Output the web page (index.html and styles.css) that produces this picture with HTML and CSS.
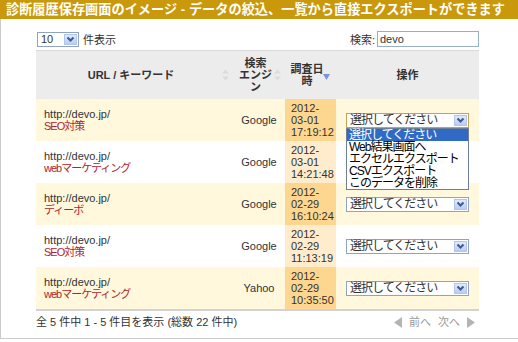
FILE: index.html
```html
<!DOCTYPE html>
<html lang="ja">
<head>
  <meta charset="UTF-8" />
  <title>診断履歴保存画面</title>
  <link rel="stylesheet" href="styles.css">
</head>
<body>

  <h1 class="title">診断履歴保存画面のイメージ - データの絞込、一覧から直接エクスポートができます</h1>

  <div class="content">
    <div class="toolbar">
      <div class="length">
        <span class="select select-small">
          <span>10</span>
          <span class="select-arrow"><svg width="9" height="7" viewBox="0 0 9 7"><polyline points="1.5,1.5 4.5,4.5 7.5,1.5" fill="none" stroke="#3f5a8c" stroke-width="2"/></svg></span>
        </span>
        <span>件表示</span>
      </div>
      <div class="search">
        <span>検索:</span>
        <input class="search-input" type="text" value="devo">
      </div>
    </div>

    <table class="list">
      <colgroup>
        <col class="w-url"><col class="w-engine"><col class="w-date"><col class="w-op">
      </colgroup>
      <thead>
        <tr>
          <th>URL / キーワード<svg class="sort" width="7" height="11" viewBox="0 0 7 11"><polygon points="3.5,0 7,4 0,4" fill="#dcdcdc"/><polygon points="0,7 7,7 3.5,11" fill="#dcdcdc"/></svg></th>
          <th>検索<br>エンジン<svg class="sort" width="7" height="11" viewBox="0 0 7 11"><polygon points="3.5,0 7,4 0,4" fill="#dcdcdc"/><polygon points="0,7 7,7 3.5,11" fill="#dcdcdc"/></svg></th>
          <th>調査日時<svg class="sort sort-on" width="7" height="6" viewBox="0 0 7 6"><polygon points="0,0 7,0 3.5,6" fill="#7b92dc"/></svg></th>
          <th class="th-op">操作</th>
        </tr>
      </thead>
      <tbody>
        <tr class="odd">
          <td class="url">http://devo.jp/<br><span class="keyword">SEO対策</span></td>
          <td class="engine">Google</td>
          <td class="date">2012-<br>03-01<br>17:19:12</td>
          <td class="op">
            <div class="select select-op focus">
              <span>選択してください</span>
              <span class="select-arrow"><svg width="9" height="7" viewBox="0 0 9 7"><polyline points="1.5,1.5 4.5,4.5 7.5,1.5" fill="none" stroke="#3f5a8c" stroke-width="2"/></svg></span>
              <ul class="options">
                <li class="active">選択してください</li>
                <li>Web結果画面へ</li>
                <li>エクセルエクスポート</li>
                <li>CSVエクスポート</li>
                <li>このデータを削除</li>
              </ul>
            </div>
          </td>
        </tr>
        <tr class="even">
          <td class="url">http://devo.jp/<br><span class="keyword">webマーケティング</span></td>
          <td class="engine">Google</td>
          <td class="date">2012-<br>03-01<br>14:21:48</td>
          <td class="op"></td>
        </tr>
        <tr class="odd">
          <td class="url">http://devo.jp/<br><span class="keyword">ディーボ</span></td>
          <td class="engine">Google</td>
          <td class="date">2012-<br>02-29<br>16:10:24</td>
          <td class="op">
            <div class="select select-op">
              <span>選択してください</span>
              <span class="select-arrow"><svg width="9" height="7" viewBox="0 0 9 7"><polyline points="1.5,1.5 4.5,4.5 7.5,1.5" fill="none" stroke="#3f5a8c" stroke-width="2"/></svg></span>
            </div>
          </td>
        </tr>
        <tr class="even">
          <td class="url">http://devo.jp/<br><span class="keyword">SEO対策</span></td>
          <td class="engine">Google</td>
          <td class="date">2012-<br>02-29<br>11:13:19</td>
          <td class="op">
            <div class="select select-op">
              <span>選択してください</span>
              <span class="select-arrow"><svg width="9" height="7" viewBox="0 0 9 7"><polyline points="1.5,1.5 4.5,4.5 7.5,1.5" fill="none" stroke="#3f5a8c" stroke-width="2"/></svg></span>
            </div>
          </td>
        </tr>
        <tr class="odd">
          <td class="url">http://devo.jp/<br><span class="keyword">webマーケティング</span></td>
          <td class="engine">Yahoo</td>
          <td class="date">2012-<br>02-29<br>10:35:50</td>
          <td class="op">
            <div class="select select-op">
              <span>選択してください</span>
              <span class="select-arrow"><svg width="9" height="7" viewBox="0 0 9 7"><polyline points="1.5,1.5 4.5,4.5 7.5,1.5" fill="none" stroke="#3f5a8c" stroke-width="2"/></svg></span>
            </div>
          </td>
        </tr>
      </tbody>
    </table>

    <div class="footer">
      <div class="info">全 5 件中 1 - 5 件目を表示 (総数 22 件中)</div>
      <div class="pager">
        <svg width="8" height="11" viewBox="0 0 8 11"><polygon points="8,0 8,11 0,5.5" fill="#b4b4b4"/></svg>
        <span>前へ</span>
        <span>次へ</span>
        <svg width="8" height="11" viewBox="0 0 8 11"><polygon points="0,0 0,11 8,5.5" fill="#b4b4b4"/></svg>
      </div>
    </div>
  </div>

</body>
</html>
```

FILE: styles.css
```css
body {
  margin: 0;
  font-family: "Liberation Sans", "Noto Sans CJK JP", sans-serif;
  font-size: 11px;
  color: #333;
  background: #fff;
}
.title {
  margin: 0;
  height: 19px;
  line-height: 19px;
  padding-left: 6px;
  background: #c9990b;
  color: #fff;
  font-size: 13.2px;
  font-weight: bold;
  white-space: nowrap;
  overflow: hidden;
}
.content {
  height: 320px;
  box-sizing: border-box;
  padding: 12px 39px 0 35px;
  border-left: 1px solid #cbcbcb;
  border-bottom: 1px solid #cbcbcb;
}
.toolbar {
  display: flex;
  justify-content: space-between;
  align-items: center;
  height: 16px;
  margin-bottom: 3px;
}
.length {
  display: flex;
  align-items: center;
  gap: 4px;
  margin-left: 1px;
}
.search {
  display: flex;
  align-items: center;
  gap: 2px;
}
.search-input {
  width: 102px;
  height: 16px;
  box-sizing: border-box;
  margin: 0;
  padding: 0 2px;
  border: 1px solid #98afc6;
  font: inherit;
  color: #333;
}

/* fake select boxes */
.select {
  position: relative;
  display: flex;
  align-items: center;
  justify-content: space-between;
  height: 15px;
  box-sizing: border-box;
  padding: 0 1px 0 3px;
  border: 1px solid #8ea4c1;
  background: #fff;
}
.select-small {
  width: 42px;
}
.select-op {
  width: 123px;
  font-size: 12px;
  letter-spacing: -1px;
}
.select.focus {
  border-color: #c9a14f;
}
.select-arrow {
  display: flex;
  align-items: center;
  justify-content: center;
  width: 13px;
  height: 11px;
  box-sizing: border-box;
  border: 1px solid #b3c5ea;
  background: linear-gradient(#e1e9fc, #b8ccf5);
}
.options {
  position: absolute;
  left: -1px;
  top: 14px;
  width: 123px;
  margin: 0;
  padding: 0;
  list-style: none;
  box-sizing: border-box;
  border: 1px solid #6f7f95;
  background: #fff;
  color: #000;
  z-index: 2;
}
.options li {
  line-height: 12px;
  padding-left: 2px;
}
.options .active {
  background: #316ac5;
  color: #fff;
}

/* table */
.list {
  width: 443px;
  border-collapse: collapse;
  table-layout: fixed;
  border-bottom: 2px solid #d2d2d2;
}
.w-url { width: 197px; }
.w-engine { width: 52px; }
.w-date { width: 51px; }
.w-op { width: 143px; }
th {
  position: relative;
  height: 48px;
  padding: 0 11px 0 4px;
  background: #ececec;
  border-top: 1px solid #d9d9d9;
  line-height: 12px;
  font-weight: bold;
  text-align: center;
}
.th-op {
  padding: 0;
}
.sort {
  position: absolute;
  right: 4px;
  top: 50%;
  transform: translateY(-50%);
}
.sort-on {
  right: 6px;
  margin-top: 2px;
}
td {
  height: 42px;
  padding: 0;
  line-height: 12px;
  vertical-align: middle;
}
.odd td {
  background: #fff8dc;
}
.odd td.date {
  background: #fdd690;
}
.even td.date {
  background: #feeccd;
}
.url {
  padding-left: 8px;
}
.keyword {
  color: #b3222a;
  letter-spacing: -1px;
}
.engine {
  text-align: center;
}
.date {
  padding-left: 6px;
}
.op {
  padding-left: 10px;
}

.footer {
  display: flex;
  justify-content: space-between;
  align-items: center;
  padding-top: 4px;
  line-height: 14px;
}
.pager {
  display: flex;
  align-items: center;
  gap: 7px;
  margin-right: 4px;
  color: #999;
}
```
